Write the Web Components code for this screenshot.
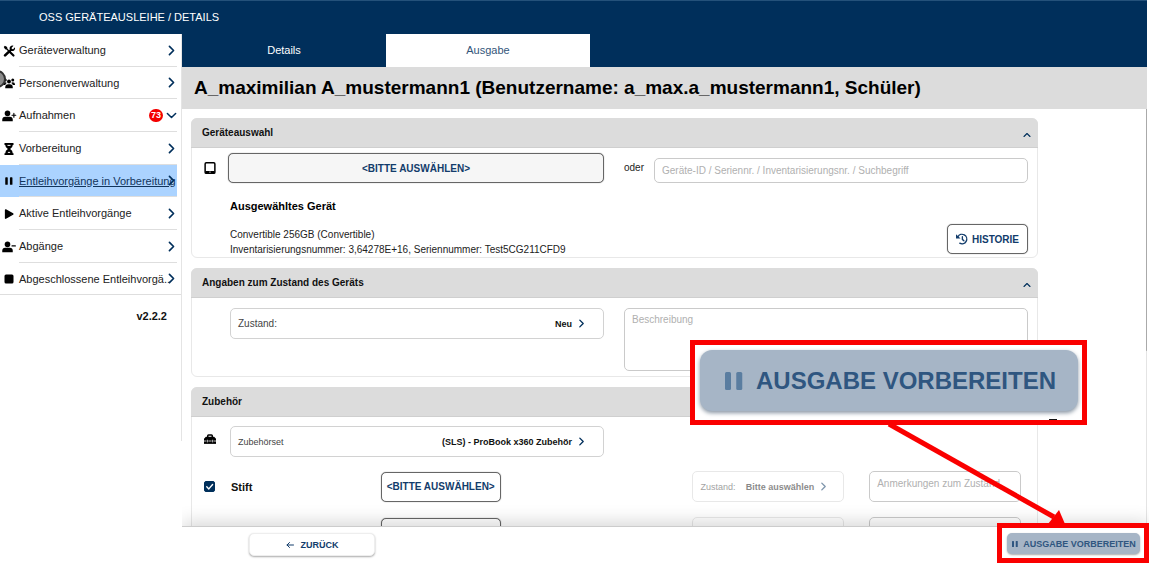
<!DOCTYPE html>
<html lang="de">
<head>
<meta charset="utf-8">
<title>OSS Geräteausleihe / Details</title>
<style>
  body { margin: 0; font-family: "Liberation Sans", Arial, sans-serif; font-size: 11px; color: #222; background: #fff; --navy: #002f5b; --bar: #dcdcdc; --line: #d2d2d2; }
</style>
</head>
<body>
<oss-app></oss-app>
<script>
const define = (name, html, setup) => {
  const template = document.createElement('template');
  template.innerHTML = html;
  customElements.define(name, class extends HTMLElement {
    connectedCallback() {
      if (this.shadowRoot) return;
      this.attachShadow({ mode: 'open' }).append(template.content.cloneNode(true));
      if (setup) setup(this, this.shadowRoot);
    }
  });
};

const stroke = (d, w = 2) => `<path d="${d}" fill="none" stroke="currentColor" stroke-width="${w}" stroke-linecap="round" stroke-linejoin="round"/>`;
const person = '<circle cx="6" cy="4.5" r="3.7"/><path d="M-1 15v-2q0-4 4-4h6q4 0 4 4v2z"/>';
const icons = {
  tools: '<path d="M1 2.500 2.500 1 5.500 2.800 5.800 4.800 8 7l1-1Q8 3 10 1.500 12 0 14 1l-2.500 2.500.3 1.700 1.700.3L16 3q.7 2.500-1.200 4.200Q13 8.500 11 8l-.5.500 4.500 4.500q1 1 0 2t-2 0L8.500 10.500 4 15q-1.200 1.200-2.500 0t0-2.500L6.500 8 4.500 6 2.800 5.500z"/>',
  users: '<circle cx="3" cy="4" r="2"/><circle cx="13" cy="4" r="2"/><circle cx="8" cy="6" r="2.600"/><path d="M0 10q0-3 3-3 1.500 0 2 1-1.500 1-2 2.500H0zM16 10q0-3-3-3-1.500 0-2 1 1.500 1 2 2.500h3zM3 15v-1.500Q3 9.500 7 9.500h2q4 0 4 4V15z"/>',
  plus: person + stroke('M14.500 4.500v5M12 7h5', 1.500),
  minus: person + stroke('M12 6.500h4.500', 1.500),
  hourglass: '<path d="M2 0h12v2.500h-1q0 3.500-3.500 5.500 3.500 2 3.500 5.500h1V16H2v-2.500h1Q3 10 6.500 8 3 6 3 2.500H2z"/><path d="M6 3.200h4M6.500 12.500h3" stroke="#fff" stroke-width="1.300"/>',
  pause: '<rect x="2" y="2" width="4" height="12" rx="1"/><rect x="9.500" y="2" width="4" height="12" rx="1"/>',
  play: '<path d="M3.500 2.500 13 8 3.500 13.500z" stroke="currentColor" stroke-width="2" stroke-linejoin="round"/>',
  square: '<rect x="2" y="2" width="12" height="12" rx="2"/>',
  right: stroke('M5 2l6 6-6 6', 2.400),
  down: stroke('M2 5l6 6 6-6', 2.200),
  up: stroke('M2 11l6-6 6 6', 2.200),
  left: stroke('M15 8H2M7 3L2 8l5 5', 2),
  tablet: '<rect x="1.500" y="1" width="13" height="14" rx="1.500" fill="none" stroke="currentColor" stroke-width="2"/><path d="M2 12h12v3H2z"/><path d="M7 13.500h2" stroke="#fff"/>',
  toolbox: '<path d="M4 5V3.500Q4 1.500 6 1.500h4q2 0 2 2V5h1.500L16 7.500V10H0V7.500L2.500 5zm2 0h4V3.500H6z"/><path d="M0 9h16v5.500H0z"/><path d="M0 10.700h3.200M5.800 10.700h4.400M12.800 10.700H16M4.500 9v3.500M11.500 9v3.500" stroke="#fff" stroke-width="1"/>',
  history: stroke('M2.500 5A6.300 6.300 0 1 1 5 13.600M8.500 5v3.500l2 1.800', 1.800) + '<path d="M0 1.500v5.800h6z"/>',
  check: stroke('M4 8.500l3 3 5.500-6.500', 2)
};

define('oss-icon', `<style>
  :host { display: inline-flex; flex: none; width: 12px; height: 12px; }
  svg { width: 100%; height: 100%; fill: currentColor; overflow: visible; }
</style><svg viewBox="0 0 16 16" aria-hidden="true"></svg>`, (el, root) => {
  root.querySelector('svg').innerHTML = icons[el.getAttribute('name')];
});

define('oss-nav-item', `<style>
  :host { display: block; box-sizing: border-box; height: 33px; margin-right: 4px; color: #222; }
  :host(:nth-child(3n+2)) { height: 32px; }
  a { display: flex; align-items: center; height: 100%; box-sizing: border-box; color: inherit; text-decoration: none; padding-left: 3px; }
  .icon { color: #000; width: 12px; margin-right: 4px; flex: none; display: flex; align-items: center; justify-content: center; }
  .icon oss-icon[name=pause] { width: 10px; height: 10px; }
  .body { flex: 1; min-width: 0; height: 100%; box-sizing: border-box; display: flex; align-items: center; border-bottom: 1px solid #dedede; }
  .label { flex: 1 0 0; min-width: 0; white-space: nowrap; }
  .chevron { width: 11px; height: 11px; color: var(--navy); }
  :host([active]) { background: #abd3ff; }
  :host([active]) .label { text-decoration: underline; color: #12355b; }
  :host(:last-child) { margin-right: 0; }
  :host(:last-child) a { border-bottom: 1px solid #dedede; padding-right: 4px; }
  :host(:last-child) .body { border: 0; }
</style><a href="#"><span class="icon"></span><span class="body"><span class="label"><slot></slot></span><slot name="badge"></slot></span></a>`, (el, root) => {
  const icon = document.createElement('oss-icon');
  icon.setAttribute('name', el.getAttribute('icon'));
  root.querySelector('.icon').append(icon);
  const chevron = document.createElement('oss-icon');
  chevron.className = 'chevron';
  chevron.setAttribute('name', el.hasAttribute('open') ? 'down' : 'right');
  root.querySelector('.body').append(chevron);
});

define('oss-badge', `<style>
  :host { display: block; background: #f40000; color: #fff; font-size: 9px; font-weight: bold; line-height: 13px; padding: 0 2px; border-radius: 7px; margin-right: 3px; }
</style><slot></slot>`);

define('oss-tab', `<style>
  :host { display: block; flex: none; width: 204px; }
  button { width: 100%; height: 100%; padding: 0 0 2px; border: 0; background: var(--navy); color: #fff; font: inherit; }
  :host([active]) button { background: #fff; color: #33557a; }
</style><button type="button" role="tab"><slot></slot></button>`);

define('oss-card', `<style>
  :host { display: block; box-sizing: border-box; border: 1px solid #e8e8e8; border-radius: 6px; background: #fff; }
  header { display: flex; align-items: center; justify-content: space-between; height: 29px; margin: -1px -1px 0; padding: 0 7px 0 11px; background: var(--bar); border-bottom: 1px solid #cfcfcf; border-radius: 6px 6px 0 0; }
  h2 { margin: 0; font-size: 10px; font-weight: bold; color: #111; }
  oss-icon { width: 8px; height: 8px; color: var(--navy); margin-top: 4px; }
  .body { padding: 0 9px 0 12px; }
</style><header><h2><slot name="title"></slot></h2><oss-icon name="up"></oss-icon></header><div class="body"><slot></slot></div>`);

define('oss-button', `<style>
  :host { display: block; }
  button { display: flex; align-items: center; justify-content: center; gap: 4px; box-sizing: border-box; width: 100%; height: 30px; padding: 0; white-space: nowrap; border: 1px solid #666; border-radius: 5px; background: #fff; color: #123c6b; font: bold 10px "Liberation Sans", Arial, sans-serif; box-shadow: 0 0 1px #777; }
  :host([muted]) button { background: #f6f6f6; }
  :host([kind=back]) button { height: 23px; font-size: 9px; gap: 7px; border-color: #eee; box-shadow: 0 1px 2px #aaa; }
  :host([kind=prepare]) button { height: 21px; font-size: 9px; border: 0; background: #a6b5c6; color: #2f5680; box-shadow: 0 1px 2px #aaa; }
  :host([kind=large]) button { height: 61px; font-size: 24px; gap: 10px; border: 0; border-radius: 12px; background: #a6b5c6; color: #2f5680; box-shadow: 0 2px 4px #8895a3; }
</style><button type="button"><slot></slot></button>`);

define('oss-picker', `<style>
  :host { display: block; }
  button { display: flex; align-items: center; justify-content: space-between; box-sizing: border-box; width: 100%; height: 31px; padding: 0 17px 0 7px; border: 1px solid var(--line); border-radius: 5px; background: #fff; color: #444; font: 10px "Liberation Sans", Arial, sans-serif; white-space: nowrap; }
  .value { display: flex; align-items: center; gap: 5px; font-size: 9px; font-weight: bold; color: #111; }
  oss-icon { width: 9px; height: 9px; color: var(--navy); }
  :host([small]) button { font-size: 9px; }
  :host([disabled]) button { opacity: .5; padding-right: 15px; }
</style><button type="button"><span><slot></slot></span><span class="value"><slot name="value"></slot><oss-icon name="right"></oss-icon></span></button>`, (el, root) => {
  root.querySelector('button').disabled = el.hasAttribute('disabled');
});

define('oss-field', `<style>
  :host { display: block; }
  input, textarea { display: block; box-sizing: border-box; width: 100%; height: 25px; margin: 0; padding: 0 7px; border: 1px solid #cacaca; border-radius: 5px; font: 10px "Liberation Sans", Arial, sans-serif; background: #fff; outline: 0; }
  textarea { padding-top: 5px; resize: none; overflow: hidden; white-space: nowrap; }
  ::placeholder { color: #b0b0b0; opacity: 1; }
  :host([size=tall]) textarea { height: 63px; }
  :host([size=note]) textarea { height: 31px; padding-top: 6px; }
</style>`, (el, root) => {
  const field = document.createElement(el.hasAttribute('size') ? 'textarea' : 'input');
  const label = el.getAttribute('label');
  if (label) {
    field.placeholder = label;
    field.setAttribute('aria-label', label);
  }
  root.append(field);
});

define('oss-check', `<style>
  :host { display: block; }
  label { display: flex; align-items: center; gap: 16px; color: #111; font-weight: bold; }
  .box { display: grid; width: 11px; height: 11px; color: #fff; }
  input, oss-icon { grid-area: 1 / 1; width: 11px; height: 11px; margin: 0; }
  input { appearance: none; border: 1px solid var(--navy); background: var(--navy); border-radius: 2px; }
  oss-icon { pointer-events: none; }
</style><label><span class="box"><input type="checkbox" checked><oss-icon name="check"></oss-icon></span><span><slot></slot></span></label>`);

define('oss-equipment', `<style>
  :host { display: grid; grid-template-columns: 177fr 120fr 192fr 152fr 25fr 152fr; align-items: center; padding-right: 7px; margin-bottom: 15px; }
  .action { grid-column: 2; }
  .picker { grid-column: 4; }
  .note { grid-column: 6; }
</style><slot name="check"></slot>
<oss-button class="action"><slot name="action"></slot></oss-button>
<oss-picker class="picker" small disabled><slot name="state"></slot><slot name="value" slot="value"></slot></oss-picker>`, (el, root) => {
  const note = document.createElement('oss-field');
  note.className = 'note';
  note.setAttribute('size', 'note');
  if (el.hasAttribute('note')) note.setAttribute('label', el.getAttribute('note'));
  root.append(note);
});

define('oss-callout', `<style>
  :host { position: absolute; right: 0; bottom: 0; width: 459px; height: 224px; z-index: 5; pointer-events: none; }
  .large { box-sizing: border-box; width: 397px; height: 85px; padding: 5px 4px 0 5px; border: 5px solid #fa0000; background: #fff; }
  .large oss-icon { width: 24px; height: 24px; color: #5a7da0; }
  svg { position: absolute; inset: 0; overflow: visible; }
</style><div class="large"><oss-button kind="large"><oss-icon name="pause"></oss-icon>AUSGABE VORBEREITEN</oss-button></div>
<svg width="459" height="224" aria-hidden="true"><path d="M359 79.500h8" stroke="#111"/><path d="M199 84l165 93" stroke="#fa0000" stroke-width="5"/><path d="M369 170l6 14H358z" fill="#fa0000"/><rect x="309.500" y="185.500" width="147" height="35" fill="none" stroke="#fa0000" stroke-width="5"/></svg>`);

define('oss-app', `<style>
  :host { position: relative; display: grid; grid-template: 34px 1fr / 182px 1fr; height: 100vh; overflow: hidden; }
  .top { grid-column: 1 / -1; display: flex; align-items: center; box-sizing: border-box; margin-right: 2px; padding: 0 0 2px 39px; background: var(--navy); border-top: 1px solid #24517a; color: #fff; }
  aside { position: relative; align-self: start; box-sizing: border-box; border-right: 1px solid #e4e4e4; padding-bottom: 118px; }
  .version { margin: 15px 14px 0 0; text-align: right; font-weight: bold; line-height: 13px; color: #111; }
  .knob { position: absolute; left: -12px; top: 36px; width: 14px; height: 14px; border: 2px solid #333; border-radius: 50%; background: #8c8c8c; }
  main { min-width: 0; min-height: 0; display: grid; grid-template-rows: 33px 42px 1fr 38px; }
  .tabs { display: flex; background: var(--navy); margin-right: 2px; }
  h1 { margin: 0 2px 0 0; display: flex; align-items: center; padding-left: 12px; background: var(--bar); color: #000; font-size: 19px; white-space: nowrap; }
  .scroll { min-height: 0; overflow: hidden; display: flex; flex-direction: column; gap: 10px; padding: 9px 109px 0 9px; margin-right: 2px; background: linear-gradient(#aaa, #aaa) right top / 1px 58% no-repeat, linear-gradient(#e4e4e4, #e4e4e4) right top / 1px 100% no-repeat; }
  oss-card { flex: none; }
  .row { display: grid; grid-template-columns: 24px 376fr 424fr; }
  .row > * { min-width: 0; }
  .right { margin-left: 20px; }
  .first { padding-top: 5px; align-items: center; }
  .first .right { display: flex; align-items: end; gap: 10px; height: 30px; }
  .or { line-height: 30px; font-size: 10px; }
  .first oss-field { flex: 1; }
  .device { display: flex; align-items: end; margin-left: 26px; padding-top: 15px; }
  .device div { flex: 1; font-size: 10px; line-height: 15px; }
  h3 { margin: 0 0 13px; font-size: 11px; line-height: 16px; color: #000; }
  p { margin: 0; }
  .device oss-button { width: 81px; margin-bottom: 3px; }
  .state { padding: 10px 0 5px; }
  .set { padding: 9px 0 14px; }
  .set > oss-icon { margin-top: 7px; }
  oss-icon[name=tablet], oss-icon[name=toolbox] { color: #000; }
  .inset { margin-left: 2px; }
  footer { position: relative; display: flex; align-items: start; justify-content: space-between; border-top: 1px solid #ccc; background: #fff; padding: 6px 9px 0 67px; box-shadow: 0 -4px 18px rgba(0,0,0,.16); clip-path: inset(-30px 0 0 0); }
  footer oss-icon { width: 8px; height: 8px; }
  .back { width: 126px; }
  .prepare { width: 133px; }
</style>
<div class="top">OSS GERÄTEAUSLEIHE / DETAILS</div>
<aside>
  <nav>
    <oss-nav-item icon="tools">Geräteverwaltung</oss-nav-item>
    <oss-nav-item icon="users">Personenverwaltung</oss-nav-item>
    <oss-nav-item icon="plus" open>Aufnahmen<oss-badge slot="badge">73</oss-badge></oss-nav-item>
    <oss-nav-item icon="hourglass">Vorbereitung</oss-nav-item>
    <oss-nav-item icon="pause" active>Entleihvorgänge in Vorbereitung</oss-nav-item>
    <oss-nav-item icon="play">Aktive Entleihvorgänge</oss-nav-item>
    <oss-nav-item icon="minus">Abgänge</oss-nav-item>
    <oss-nav-item icon="square">Abgeschlossene Entleihvorgä..</oss-nav-item>
  </nav>
  <div class="version">v2.2.2</div>
  <span class="knob"></span>
</aside>
<main>
  <div class="tabs" role="tablist"><oss-tab>Details</oss-tab><oss-tab active>Ausgabe</oss-tab></div>
  <h1>A_maximilian A_mustermann1 (Benutzername: a_max.a_mustermann1, Schüler)</h1>
  <div class="scroll">
    <oss-card><span slot="title">Geräteauswahl</span>
      <div class="row first"><oss-icon name="tablet"></oss-icon><oss-button muted>&lt;BITTE AUSWÄHLEN&gt;</oss-button>
        <div class="right"><span class="or">oder</span><oss-field label="Geräte-ID / Seriennr. / Inventarisierungsnr. / Suchbegriff"></oss-field></div></div>
      <div class="device"><div><h3>Ausgewähltes Gerät</h3><p>Convertible 256GB (Convertible)</p><p>Inventarisierungsnummer: 3,64278E+16, Seriennummer: Test5CG211CFD9</p></div>
        <oss-button><oss-icon name="history"></oss-icon>HISTORIE</oss-button></div>
    </oss-card>
    <oss-card><span slot="title">Angaben zum Zustand des Geräts</span>
      <div class="row state"><span></span><oss-picker class="inset">Zustand:<span slot="value">Neu</span></oss-picker><oss-field class="right" size="tall" label="Beschreibung"></oss-field></div>
    </oss-card>
    <oss-card><span slot="title">Zubehör</span>
      <div class="row set"><oss-icon name="toolbox"></oss-icon><oss-picker class="inset" small>Zubehörset<span slot="value">(SLS) - ProBook x360 Zubehör</span></oss-picker></div>
      <oss-equipment note="Anmerkungen zum Zustand"><oss-check slot="check">Stift</oss-check><span slot="action">&lt;BITTE AUSWÄHLEN&gt;</span><span slot="state">Zustand:</span><span slot="value">Bitte auswählen</span></oss-equipment>
      <oss-equipment></oss-equipment>
    </oss-card>
  </div>
  <footer><oss-button class="back" kind="back"><oss-icon name="left"></oss-icon>ZURÜCK</oss-button><oss-button class="prepare" kind="prepare"><oss-icon name="pause"></oss-icon>AUSGABE VORBEREITEN</oss-button></footer>
</main>
<oss-callout></oss-callout>`);
</script>
</body>
</html>
